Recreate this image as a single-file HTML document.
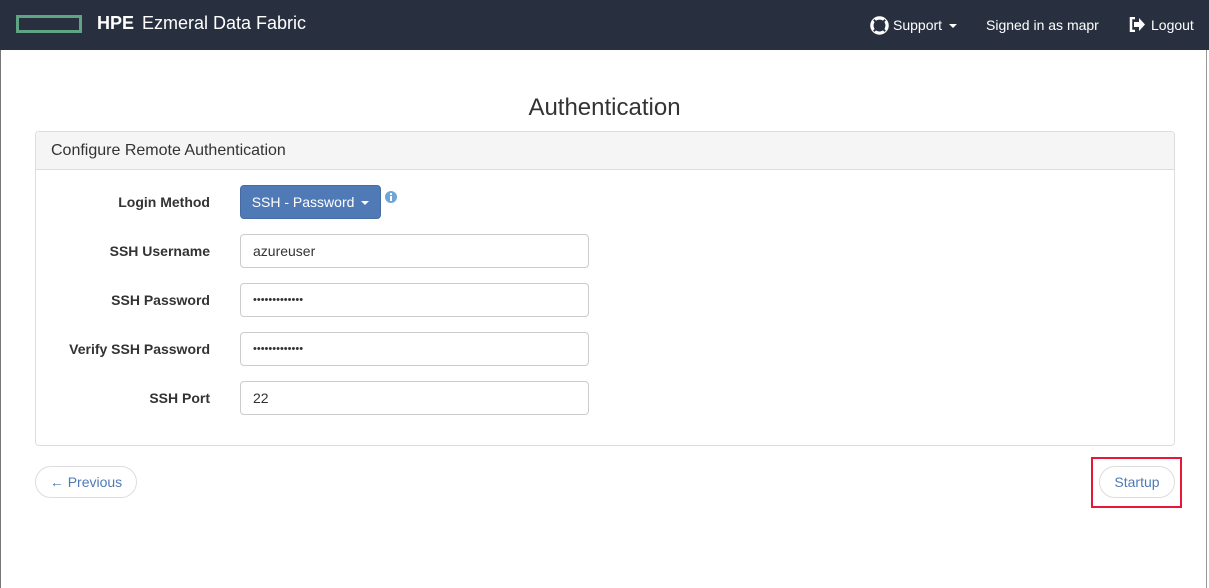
<!DOCTYPE html>
<html><head><style>
body{margin:0;width:1209px;height:588px;background:#fff;font-family:"Liberation Sans",Arial,sans-serif;position:relative;overflow:hidden;color:#333}
.nav{position:absolute;left:0;top:0;width:1209px;height:50px;background:#283040;color:#fff}
.logo{position:absolute;left:16px;top:15px;width:60px;height:12px;border:3px solid #5fa583}
.t{position:absolute;top:13px;font-size:18px}
.nv{position:absolute;top:17px;font-size:14px}
.caret{display:inline-block;width:0;height:0;border-left:4px solid transparent;border-right:4px solid transparent;border-top:4px solid #fff;vertical-align:middle;margin-left:3px}
.edgeL{position:absolute;left:0;top:50px;width:1px;height:538px;background:#777}
.edgeR{position:absolute;left:1206px;top:50px;width:1px;height:538px;background:#999}
h1{position:absolute;left:0;width:1209px;top:94px;margin:0;text-align:center;font-weight:normal;font-size:24px;color:#333}
.panel{position:absolute;left:35px;top:131px;width:1138px;height:313px;border:1px solid #ddd;border-radius:4px}
.ph{height:37px;background:#f5f5f5;border-bottom:1px solid #ddd;font-size:16px;line-height:37px;padding-left:15px;border-radius:4px 4px 0 0}
.lbl{position:absolute;width:210px;text-align:right;font-weight:bold;font-size:14px;left:0}
.inp{position:absolute;left:240px;border:1px solid #ccc;border-radius:4px;font-size:14px;line-height:32px;padding-left:12px;box-sizing:border-box;width:349px;height:34px}
.btn{position:absolute;left:240px;top:185px;width:141px;height:34px;background:#4f7ab6;border-radius:4px;color:#fff;font-size:14px;line-height:32px;text-align:center;border:1px solid #466da3;box-sizing:border-box}
.pill{position:absolute;top:466px;height:32px;border:1px solid #ddd;border-radius:16px;box-sizing:border-box;color:#4f7ab6;font-size:14px;line-height:30px;text-align:center}
</style></head><body>
<div class="nav">
<div class="logo"></div>
<div class="t" style="left:97px;font-weight:bold">HPE</div>
<div class="t" style="left:142px">Ezmeral Data Fabric</div>
<svg style="position:absolute;left:870px;top:16px" width="19" height="19" viewBox="0 0 20 20"><circle cx="10" cy="10" r="8" fill="none" stroke="#fff" stroke-width="3.5"/><circle cx="10" cy="10" r="4" fill="none" stroke="#283040" stroke-width="1.5"/><path d="M4 4l3 3M16 4l-3 3M4 16l3-3M16 16l-3-3" stroke="#283040" stroke-width="2"/></svg>
<div class="nv" style="left:893px">Support <span class="caret"></span></div>
<div class="nv" style="left:986px">Signed in as mapr</div>
<svg style="position:absolute;left:1129px;top:17px" width="17" height="15" viewBox="0 0 17 15"><path d="M6 1H2v13h4" fill="none" stroke="#fff" stroke-width="2.5"/><path d="M5 5h5V1l6 6.5-6 6.5V10H5z" fill="#fff"/></svg>
<div class="nv" style="left:1151px">Logout</div>
</div>
<div class="edgeL"></div><div class="edgeR"></div>
<h1>Authentication</h1>
<div class="panel"><div class="ph">Configure Remote Authentication</div></div>
<div class="lbl" style="top:194px">Login Method</div>
<div class="btn">SSH - Password <span class="caret"></span></div>
<svg style="position:absolute;left:385px;top:191px" width="12" height="12"><circle cx="6" cy="6" r="6" fill="#6fa6d8"/><rect x="5" y="5" width="2" height="5" fill="#fff"/><rect x="5" y="2" width="2" height="2" fill="#fff"/></svg>
<div class="lbl" style="top:243px">SSH Username</div>
<div class="inp" style="top:234px">azureuser</div>
<div class="lbl" style="top:292px">SSH Password</div>
<div class="inp" style="top:283px;font-size:11px">•••••••••••••</div>
<div class="lbl" style="top:341px">Verify SSH Password</div>
<div class="inp" style="top:332px;font-size:11px">•••••••••••••</div>
<div class="lbl" style="top:390px">SSH Port</div>
<div class="inp" style="top:381px">22</div>
<div class="pill" style="left:35px;width:102px">&larr; Previous</div>
<div class="pill" style="left:1099px;width:76px">Startup</div>
<div style="position:absolute;left:1091px;top:457px;width:87px;height:47px;border:2px solid #e8173a"></div>
</body></html>
